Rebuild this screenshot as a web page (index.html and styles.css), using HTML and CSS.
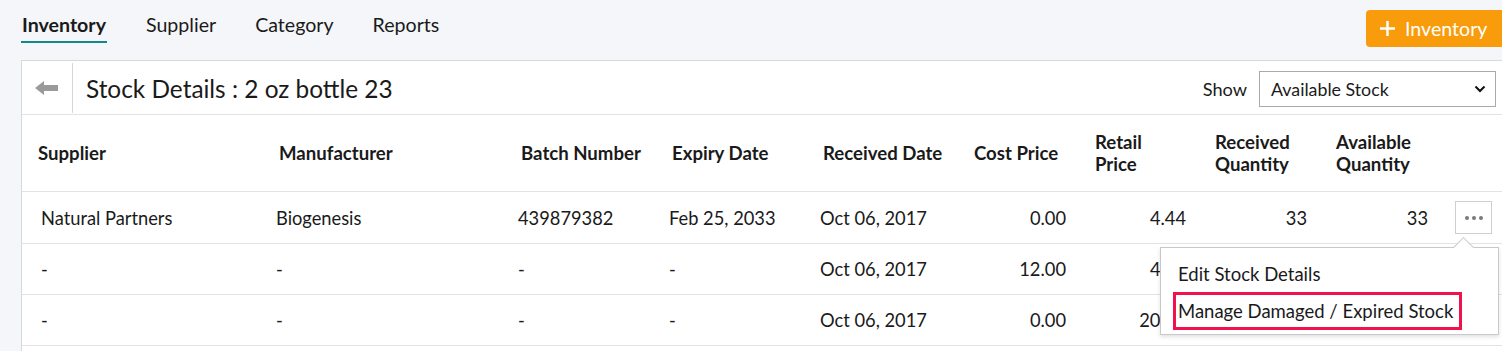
FILE: index.html
```html
<!DOCTYPE html>
<html>
<head>
<meta charset="utf-8">
<link rel="stylesheet" href="styles.css">
</head>
<body>
<div class="page">
  <div class="topbar">
    <nav class="tabs">
      <a class="tab active">Inventory</a>
      <a class="tab">Supplier</a>
      <a class="tab">Category</a>
      <a class="tab">Reports</a>
    </nav>
    <button class="add-btn"><svg width="15" height="15" viewBox="0 0 15 15"><path d="M7.5 0 V15 M0 7.5 H15" stroke="#fff" stroke-width="2.4"/></svg><span>Inventory</span></button>
  </div>
  <div class="card">
    <div class="card-head">
      <div class="back">
        <svg width="24" height="14" viewBox="0 0 24 14"><path d="M0 7 L9 0 L9 4 L23 4 L23 10 L9 10 L9 14 Z" fill="#9a9a9a"/></svg>
      </div>
      <h1 class="title">Stock Details : 2 oz bottle 23</h1>
      <div class="show">
        <span class="show-label">Show</span>
        <div class="select">
          <span>Available Stock</span>
          <svg width="12" height="8" viewBox="0 0 12 8"><path d="M1.5 1.5 L6 6 L10.5 1.5" fill="none" stroke="#111" stroke-width="2"/></svg>
        </div>
      </div>
    </div>
    <table class="grid">
      <colgroup>
        <col style="width:241px"><col style="width:242px"><col style="width:151px"><col style="width:151px"><col style="width:151px"><col style="width:121px"><col style="width:120px"><col style="width:121px"><col style="width:121px"><col style="width:80px">
      </colgroup>
      <thead>
        <tr>
          <th>Supplier</th><th>Manufacturer</th><th>Batch Number</th><th>Expiry Date</th><th>Received Date</th><th>Cost Price</th><th>Retail<br>Price</th><th>Received<br>Quantity</th><th>Available<br>Quantity</th><th></th>
        </tr>
      </thead>
      <tbody>
        <tr class="first">
          <td class="lead">Natural Partners</td><td>Biogenesis</td><td>439879382</td><td>Feb 25, 2033</td><td>Oct 06, 2017</td><td class="num">0.00</td><td class="num">4.44</td><td class="num">33</td><td class="num">33</td>
          <td class="act"><button class="dots"><i></i><i></i><i></i></button></td>
        </tr>
        <tr>
          <td class="lead">-</td><td>-</td><td>-</td><td>-</td><td>Oct 06, 2017</td><td class="num">12.00</td><td class="num">4.44</td><td class="num"></td><td class="num"></td><td></td>
        </tr>
        <tr>
          <td class="lead">-</td><td>-</td><td>-</td><td>-</td><td>Oct 06, 2017</td><td class="num">0.00</td><td class="num">20.00</td><td class="num"></td><td class="num"></td><td></td>
        </tr>
      </tbody>
    </table>
    <div class="menu">
      <div class="menu-item">Edit Stock Details</div>
      <div class="menu-item highlighted">Manage Damaged / Expired Stock</div>
    </div>
  </div>
</div>
</body>
</html>
```
FILE: styles.css
```css
html, body {
  margin: 0;
  padding: 0;
  background: #f5f6f9;
  overflow: hidden;
}
body {
  font-family: Lato, "Open Sans", sans-serif;
  color: #1a1a1a;
}
.page {
  padding-left: 21px;
  width: 1502px;
  box-sizing: border-box;
}
.topbar {
  height: 60px;
  display: flex;
  justify-content: space-between;
  align-items: flex-start;
}
.tabs {
  display: flex;
  gap: 39px;
  padding-left: 1px;
  padding-top: 11px;
}
.tab {
  font-size: 19.6px;
  line-height: 27px;
  padding-bottom: 3px;
  border-bottom: 2px solid transparent;
  color: #1a1a1a;
}
.tab.active {
  font-weight: 700;
  border-bottom-color: #12878c;
  margin-left: -1px;
  padding: 0 1px 3px;
}
.add-btn {
  margin-top: 10px;
  margin-right: -10px;
  height: 37px;
  width: 146px;
  background: #f99c0c;
  border: 0;
  border-radius: 4px;
  color: #fff;
  font-family: Lato, sans-serif;
  font-size: 19.6px;
  padding: 0 0 0 14px;
  display: flex;
  align-items: center;
  gap: 10px;
}
.card {
  position: relative;
  background: #fff;
  border: 1px solid #d9d9d9;
  margin-right: -30px;
  height: 320px;
}
.card-head {
  display: flex;
  align-items: center;
  height: 53px;
  border-bottom: 1px solid #e3e3e3;
}
.back {
  width: 50px;
  height: 50px;
  border-right: 1px solid #d6d6d6;
  display: flex;
  align-items: center;
  justify-content: center;
  margin-top: 1px;
}
.title {
  font-size: 24.4px;
  font-weight: 400;
  margin: 2px 0 0 13px;
  flex: 1;
}
.show {
  display: flex;
  align-items: center;
  gap: 12px;
  margin-right: 35px;
  margin-top: 2px;
}
.show-label {
  font-size: 18.2px;
}
.select {
  width: 235px;
  height: 34px;
  border: 1px solid #a9a9a9;
  display: flex;
  align-items: center;
  justify-content: space-between;
  font-size: 17.8px;
  padding: 0;
}
.select span {
  padding-left: 11px;
}
.select svg {
  margin-right: 9px;
}
.grid {
  border-collapse: collapse;
  table-layout: fixed;
  width: 1320px;
}
.grid th {
  text-align: left;
  font-weight: 700;
  font-size: 18.6px;
  line-height: 22px;
  height: 76px;
  padding: 0 16px;
  border-bottom: 1px solid #e3e3e3;
  vertical-align: middle;
  white-space: nowrap;
}
.grid td {
  height: 50px;
  padding: 0 16px 0 13px;
  font-size: 18.3px;
  border-bottom: 1px solid #e3e3e3;
  vertical-align: middle;
  white-space: nowrap;
}
.grid tr.first td {
  height: 51px;
}
.grid td.lead {
  padding-left: 19px;
}
.grid td.num {
  text-align: right;
  padding-right: 13px;
}
.grid td.act {
  padding: 0 0 0 14px;
}
.dots {
  width: 37px;
  height: 33px;
  background: #fff;
  border: 1px solid #cfcfcf;
  display: flex;
  align-items: center;
  justify-content: center;
  gap: 3px;
  padding: 0;
}
.dots i {
  width: 4px;
  height: 4px;
  border-radius: 50%;
  background: #7a7a7a;
}
.menu {
  position: absolute;
  left: 1138px;
  top: 186px;
  width: 339px;
  height: 88px;
  background: #fff;
  border: 1px solid #c9c9c9;
  box-shadow: 0 2px 4px rgba(0,0,0,0.12);
  padding: 10px 0 0 12px;
  box-sizing: border-box;
}
.menu::before {
  content: "";
  position: absolute;
  top: -8px;
  left: 295px;
  width: 14px;
  height: 14px;
  background: #fff;
  border-left: 1px solid #c9c9c9;
  border-top: 1px solid #c9c9c9;
  transform: rotate(45deg);
}
.menu-item {
  font-size: 18.5px;
  line-height: 32px;
  padding-left: 5px;
  width: 281px;
}
.highlighted {
  margin-top: 2px;
  border: 3px solid #f0124c;
  line-height: 32px;
  padding-left: 2px;
  white-space: nowrap;
}
```
